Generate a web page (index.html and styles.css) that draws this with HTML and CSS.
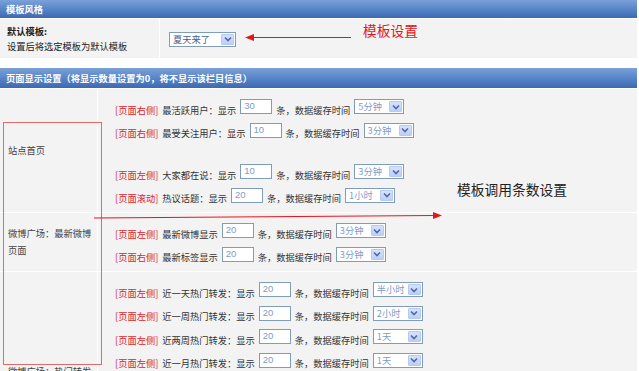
FILE: index.html
```html
<!DOCTYPE html>
<html lang="zh-CN">
<head>
<meta charset="utf-8">
<title>模板风格</title>
<link rel="stylesheet" href="styles.css">
</head>
<body>
<div class="page">
  <section class="panel">
    <div class="bar">模板风格</div>
    <div class="row row-tpl">
      <div class="cell tpl-label">
        <div class="strong">默认模板:</div>
        <div>设置后将选定模板为默认模板</div>
      </div>
      <div class="cell tpl-field">
        <span class="select select-wide"><span class="val">夏天来了</span><span class="btn"><svg viewBox="0 0 8 6" width="8" height="6"><path d="M1 1.5 L4 4.5 L7 1.5" fill="none" stroke="#4d6aa8" stroke-width="1.6"/></svg></span></span>
      </div>
    </div>
  </section>

  <section class="panel">
    <div class="bar bar-lg">页面显示设置（将显示数量设置为0，将不显示该栏目信息）</div>

    <div class="row">
      <div class="cell side">站点首页</div>
      <div class="cell lines">
        <div class="line"><span class="tag">[页面右侧]</span><span class="txt">最活跃用户：显示</span><span class="num">30</span><span class="txt">条，数据缓存时间</span><span class="select"><span class="val">5分钟</span><span class="btn"><svg viewBox="0 0 8 6" width="8" height="6"><path d="M1 1.5 L4 4.5 L7 1.5" fill="none" stroke="#4d6aa8" stroke-width="1.6"/></svg></span></span></div>
        <div class="line"><span class="tag">[页面右侧]</span><span class="txt">最受关注用户：显示</span><span class="num">10</span><span class="txt">条，数据缓存时间</span><span class="select"><span class="val">3分钟</span><span class="btn"><svg viewBox="0 0 8 6" width="8" height="6"><path d="M1 1.5 L4 4.5 L7 1.5" fill="none" stroke="#4d6aa8" stroke-width="1.6"/></svg></span></span></div>
        <div class="spacer"></div>
        <div class="line"><span class="tag">[页面左侧]</span><span class="txt">大家都在说：显示</span><span class="num">10</span><span class="txt">条，数据缓存时间</span><span class="select"><span class="val">3分钟</span><span class="btn"><svg viewBox="0 0 8 6" width="8" height="6"><path d="M1 1.5 L4 4.5 L7 1.5" fill="none" stroke="#4d6aa8" stroke-width="1.6"/></svg></span></span></div>
        <div class="line"><span class="tag">[页面滚动]</span><span class="txt">热议话题：显示</span><span class="num">20</span><span class="txt">条，数据缓存时间</span><span class="select"><span class="val">1小时</span><span class="btn"><svg viewBox="0 0 8 6" width="8" height="6"><path d="M1 1.5 L4 4.5 L7 1.5" fill="none" stroke="#4d6aa8" stroke-width="1.6"/></svg></span></span></div>
      </div>
    </div>

    <div class="row">
      <div class="cell side">微博广场：最新微博<br>页面</div>
      <div class="cell lines">
        <div class="line"><span class="tag">[页面左侧]</span><span class="txt">最新微博显示</span><span class="num">20</span><span class="txt">条，数据缓存时间</span><span class="select"><span class="val">3分钟</span><span class="btn"><svg viewBox="0 0 8 6" width="8" height="6"><path d="M1 1.5 L4 4.5 L7 1.5" fill="none" stroke="#4d6aa8" stroke-width="1.6"/></svg></span></span></div>
        <div class="line"><span class="tag">[页面右侧]</span><span class="txt">最新标签显示</span><span class="num">20</span><span class="txt">条，数据缓存时间</span><span class="select"><span class="val">3分钟</span><span class="btn"><svg viewBox="0 0 8 6" width="8" height="6"><path d="M1 1.5 L4 4.5 L7 1.5" fill="none" stroke="#4d6aa8" stroke-width="1.6"/></svg></span></span></div>
      </div>
    </div>

    <div class="row">
      <div class="cell side">微博广场：热门转发</div>
      <div class="cell lines">
        <div class="line"><span class="tag">[页面左侧]</span><span class="txt">近一天热门转发：显示</span><span class="num">20</span><span class="txt">条，数据缓存时间</span><span class="select"><span class="val">半小时</span><span class="btn"><svg viewBox="0 0 8 6" width="8" height="6"><path d="M1 1.5 L4 4.5 L7 1.5" fill="none" stroke="#4d6aa8" stroke-width="1.6"/></svg></span></span></div>
        <div class="line"><span class="tag">[页面左侧]</span><span class="txt">近一周热门转发：显示</span><span class="num">20</span><span class="txt">条，数据缓存时间</span><span class="select"><span class="val">2小时</span><span class="btn"><svg viewBox="0 0 8 6" width="8" height="6"><path d="M1 1.5 L4 4.5 L7 1.5" fill="none" stroke="#4d6aa8" stroke-width="1.6"/></svg></span></span></div>
        <div class="line"><span class="tag">[页面左侧]</span><span class="txt">近两周热门转发：显示</span><span class="num">20</span><span class="txt">条，数据缓存时间</span><span class="select"><span class="val">1天</span><span class="btn"><svg viewBox="0 0 8 6" width="8" height="6"><path d="M1 1.5 L4 4.5 L7 1.5" fill="none" stroke="#4d6aa8" stroke-width="1.6"/></svg></span></span></div>
        <div class="line"><span class="tag">[页面左侧]</span><span class="txt">近一月热门转发：显示</span><span class="num">20</span><span class="txt">条，数据缓存时间</span><span class="select"><span class="val">1天</span><span class="btn"><svg viewBox="0 0 8 6" width="8" height="6"><path d="M1 1.5 L4 4.5 L7 1.5" fill="none" stroke="#4d6aa8" stroke-width="1.6"/></svg></span></span></div>
        <div class="pad"></div>
      </div>
    </div>
  </section>

  <svg class="marks" viewBox="0 0 639 371" width="639" height="371">
    <line x1="351" y1="37.5" x2="252" y2="37.5" stroke="#e8141c" stroke-width="1"/>
    <polygon points="245,37.5 254,34 254,41" fill="#e8141c"/>
    <rect x="3.5" y="122.5" width="98" height="242" fill="none" stroke="#e46a6a" stroke-width="1"/>
    <line x1="94" y1="218" x2="434" y2="215.5" stroke="#e8141c" stroke-width="1"/>
    <polygon points="442,215.5 433,212 433,219" fill="#e8141c"/>
  </svg>
  <div class="note note-red">模板设置</div>
  <div class="note note-dark">模板调用条数设置</div>
</div>
</body>
</html>
```

FILE: styles.css
```css
* { box-sizing: border-box; }

body {
  margin: 0;
  background: #fff;
  font-family: "Noto Sans CJK SC", "Noto Sans", sans-serif;
  font-size: 9.25px;
  color: #333;
}

.page {
  position: relative;
  width: 637px;
}

.panel {
  display: flex;
  flex-direction: column;
  gap: 1px;
}

.panel + .panel { margin-top: 10px; }

.bar {
  height: 18px;
  padding-left: 6px;
  display: flex;
  align-items: center;
  color: #fff;
  font-weight: bold;
  background: linear-gradient(#7aa1d8, #5583c6 55%, #3d69b1);
}

.bar-lg { height: 20px; }

.row {
  display: grid;
  grid-template-columns: 97px 1fr;
  gap: 1px;
}

.row-tpl {
  grid-template-columns: 159px 1fr;
  height: 39px;
}

.cell { background: #f3f3f3; }

.tpl-label {
  padding-left: 7px;
  display: flex;
  flex-direction: column;
  justify-content: center;
  line-height: 15px;
  padding-top: 1px;
  color: #222;
}

.strong { font-weight: bold; }

.tpl-field {
  display: flex;
  align-items: center;
  padding-left: 9px;
  padding-top: 1px;
}

.side {
  display: flex;
  align-items: center;
  padding-left: 8px;
  line-height: 17px;
  color: #444;
}

.lines {
  display: flex;
  flex-direction: column;
  padding: 6px 0 5px 17px;
}

.line {
  height: 23.5px;
  display: flex;
  align-items: center;
  gap: 4px;
  white-space: nowrap;
}

.spacer { height: 18px; }

.pad { height: 94px; }

.tag, .txt {
  margin-top: 6px;
  line-height: 10px;
}

.tag { color: #d9232a; }
.txt { color: #333; }

.num {
  width: 32px;
  height: 15px;
  border: 1px solid #7f9db9;
  background: #fff;
  font-family: "Liberation Sans", Arial, sans-serif;
  font-size: 9.5px;
  line-height: 11px;
  padding-left: 3px;
  color: #7f9bc6;
}

.select {
  width: 50px;
  height: 15px;
  border: 1px solid #7f9db9;
  background: #fff;
  display: flex;
  align-items: stretch;
  color: #7f9bc6;
}

.select-wide {
  width: 67px;
  color: #4a5f8c;
}

.val {
  flex: 1;
  padding-left: 3px;
  line-height: 12px;
  font-size: 9.25px;
}

.btn {
  width: 13px;
  margin: 1px;
  border: 1px solid #b7c9f3;
  border-radius: 1px;
  background: linear-gradient(#d6e2fc, #bccff7);
  display: flex;
  align-items: center;
  justify-content: center;
}

.marks {
  position: absolute;
  left: 0;
  top: 0;
  pointer-events: none;
}

.note {
  position: absolute;
  font-size: 13.75px;
  line-height: 16px;
  white-space: nowrap;
}

.note-red {
  left: 363px;
  top: 22px;
  color: #e8141c;
}

.note-dark {
  left: 457px;
  top: 181px;
  color: #222;
}
```
